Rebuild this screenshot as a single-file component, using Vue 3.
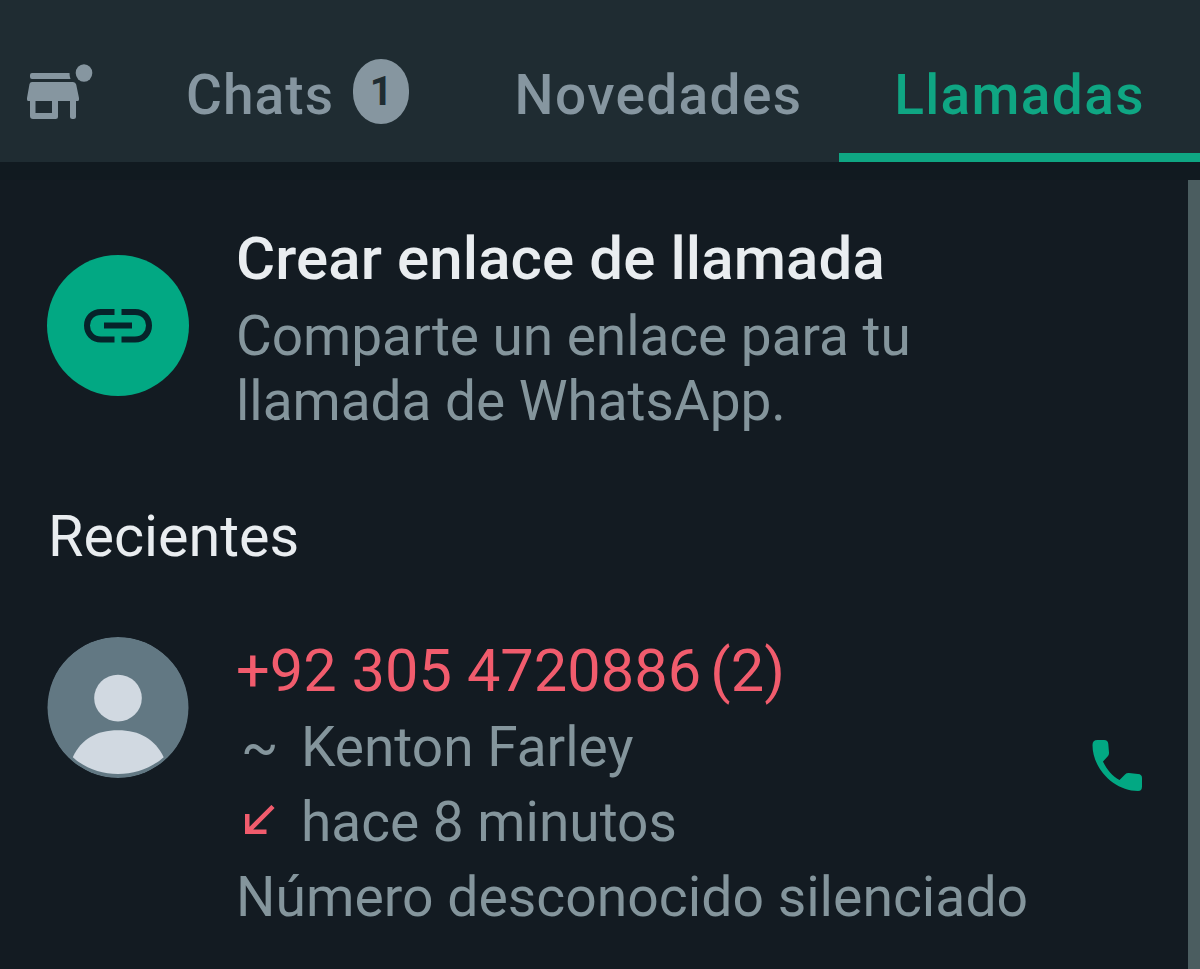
<template>
  <div class="screen">
    <header class="tabs">
      <button class="tab tab-market" aria-label="Herramientas" @click="active = 'tools'">
        <svg width="66" height="56" viewBox="0 0 66 56" fill="#8696a0">
          <path d="M5 9h37.500a16 16 0 0 0 1 6H5a2 2 0 0 1-2-2v-2a2 2 0 0 1 2-2z" />
          <path fill-rule="evenodd" d="M5 18h41q2.500 0 3.200 2.500L52 34v1.500q0 1.500-1.500 1.500H49v15.500q0 2.500-2.500 2.500h-1q-2.500 0-2.500-2.500V37H31v15.500q0 2.500-2.500 2.500H6q-3 0-3-3V37H1.500Q0 37 0 35.500V34l2.500-14Q3 18 5 18zM8.500 37v12H25V37z" />
          <ellipse cx="57" cy="9" rx="8.300" ry="8.800" />
        </svg>
      </button>
      <button
        v-for="tab in tabs"
        :key="tab.id"
        :class="['tab', 'tab-' + tab.id, { active: active === tab.id }]"
        @click="active = tab.id"
      >
        <span>{{ tab.label }}</span>
        <span v-if="tab.badge" class="badge">{{ tab.badge }}</span>
      </button>
    </header>

    <main class="body">
      <div class="content">
        <section class="row link-row">
          <div class="circle circle-link">
            <svg width="68" height="36" viewBox="0 0 68 36" fill="none" stroke="#06232a" stroke-width="6">
              <path d="M30.500 4H17C8.500 4 3 10 3 17.500S8.500 31.500 17 31.500h13.500M37.500 4H51c8.500 0 14 6 14 13.500s-5.500 14-14 14H37.500" />
              <path d="M20 17.500h28" />
            </svg>
          </div>
          <div class="text">
            <div class="title">Crear enlace de llamada</div>
            <div class="sub">Comparte un enlace para tu<br />llamada de WhatsApp.</div>
          </div>
        </section>

        <h2 class="heading">Recientes</h2>

        <section v-for="call in calls" :key="call.number" class="row call-row">
          <svg class="circle" viewBox="0 0 142 142">
            <circle cx="71" cy="71" r="71" fill="#627883" />
            <ellipse cx="71" cy="61.500" rx="24" ry="23.500" fill="#d1d9e1" />
            <path d="M25.500 121C34 103 49 94 71 94s37 9 46 27c-13 11.500-29 17-46 17s-33-5.500-45.500-17z" fill="#d1d9e1" />
          </svg>
          <div class="text">
            <div class="number">
              <span>{{ call.number }}</span>
              <span class="count">({{ call.count }})</span>
            </div>
            <div class="line">
              <span class="lead">~</span>
              <span class="name">{{ call.name }}</span>
            </div>
            <div class="line">
              <span class="lead">
                <svg width="30" height="30" viewBox="0 0 30 30" fill="none" stroke="#f15c6d" stroke-width="4.500">
                  <path d="M28 1.500L3 26.500M2.250 9v17.750h19.250" />
                </svg>
              </span>
              <span class="time">{{ call.time }}</span>
            </div>
            <div class="line note">{{ call.note }}</div>
          </div>
          <button class="phone" aria-label="Llamar">
            <svg width="51" height="51" viewBox="0 0 50 51" fill="#02a883">
              <path d="M5 0h6.500q4 0 4.300 4l.7 8.500q.2 2.500-1.400 4.100L10.500 21.500C14 29.500 20 36 27 40l5.500-5.500q1.500-1.500 4-1.400l9 .9q4 .3 4 4v8.500q0 4.500-4 4.500C22 51 0 29 0 5Q0 0 5 0z" />
            </svg>
          </button>
        </section>
      </div>
      <div class="scrollbar"></div>
    </main>
  </div>
</template>

<script setup>
import { ref } from 'vue'

const active = ref('calls')

const tabs = [
  { id: 'chats', label: 'Chats', badge: 1 },
  { id: 'news', label: 'Novedades' },
  { id: 'calls', label: 'Llamadas' }
]

const calls = [
  {
    number: '+92 305 4720886',
    count: 2,
    name: 'Kenton Farley',
    time: 'hace 8 minutos',
    note: 'Número desconocido silenciado'
  }
]
</script>

<style>
body { margin: 0; background: #131b22; }
</style>

<style scoped>
.screen { width: 1200px; height: 969px; overflow: hidden; display: flex; flex-direction: column; background: #131b22; font-family: Roboto, "Liberation Sans", sans-serif; color: #84959c; }
button { font: inherit; color: inherit; background: none; border: none; padding: 0; cursor: pointer; }
.tabs { display: flex; height: 162px; flex-shrink: 0; background: #1f2c32; }
.tab { display: flex; align-items: center; justify-content: center; box-sizing: border-box; padding-top: 44px; padding-bottom: 8px; border-bottom: 9px solid transparent; font-size: 55px; font-weight: 500; letter-spacing: 1.35px; white-space: nowrap; color: #8696a0; }
.tab-market { width: 120px; padding-top: 38px; }
.tab-chats { width: 355px; gap: 19px; letter-spacing: 1.1px; }
.tab-news { width: 364px; padding-left: 3px; }
.tab-calls { width: 361px; }
.tab.active { color: #0fa683; border-bottom-color: #0fa683; }
.badge { display: flex; align-items: center; justify-content: center; width: 56px; height: 65px; margin-top: -6px; border-radius: 28px / 31px; background: #8696a0; color: #1f2c32; font-size: 40px; font-weight: 700; letter-spacing: 0; }
.body { flex: 1; display: flex; border-top: 18px solid #111a20; min-height: 0; }
.content { flex: 1; padding: 45px 45px 0 47px; }
.scrollbar { width: 12px; background: #4b5d60; }
.row { display: flex; align-items: flex-start; }
.circle { width: 142px; height: 141px; flex-shrink: 0; border-radius: 50%; margin-right: 47px; }
.circle-link { display: flex; align-items: center; justify-content: center; margin-top: 30px; background: #02a883; }
.text { flex: 1; white-space: nowrap; }
.title { font-size: 60px; line-height: 68px; font-weight: 500; letter-spacing: 0.1px; color: #e9edf0; }
.sub { margin-top: 11px; font-size: 55px; line-height: 65px; letter-spacing: -0.05px; }
.heading { margin: 70px 0 0 1px; font-size: 57.5px; line-height: 66px; font-weight: 400; color: #e9edf0; }
.call-row { margin-top: 66px; }
.call-row .circle { margin-top: 1px; }
.number { display: flex; gap: 9px; font-size: 59.5px; line-height: 70px; letter-spacing: 0.05px; margin-bottom: 4px; color: #f15c6d; }
.line { display: flex; align-items: center; font-size: 55px; line-height: 75px; }
.note { font-size: 55.3px; }
.lead { display: flex; width: 65px; padding-left: 5px; box-sizing: border-box; }
.lead svg { margin: -5px 0 0 4px; }
.phone { display: flex; margin: 104px 0 0 -1px; }
</style>
